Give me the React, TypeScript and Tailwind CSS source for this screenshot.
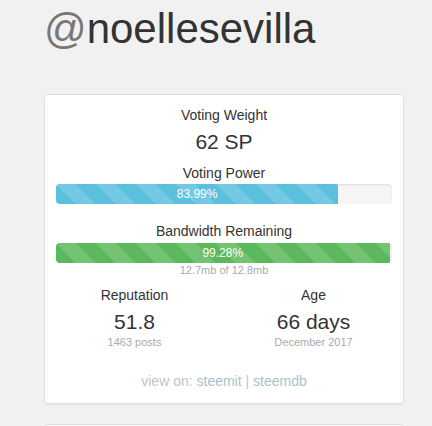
import React from "react";

const stripes =
  "linear-gradient(45deg, rgba(255,255,255,.15) 25%, transparent 25%, transparent 50%, rgba(255,255,255,.15) 50%, rgba(255,255,255,.15) 75%, transparent 75%, transparent)";

function Bar({ pct, color, label }: { pct: number; color: string; label: string }) {
  return (
    <div className="h-[20px] w-full overflow-hidden rounded-[4px] bg-[#f5f5f5] shadow-[inset_0_1px_2px_rgba(0,0,0,0.1)]">
      <div
        className="flex h-full items-center justify-center text-[12px] leading-[20px] text-white"
        style={{ width: `${pct}%`, backgroundColor: color, backgroundImage: stripes, backgroundSize: "40px 40px" }}
      >
        {label}
      </div>
    </div>
  );
}

export default function App() {
  return (
    <div className="min-h-[426px] w-[432px] bg-[#f1f1f1] font-['Liberation_Sans',Arial,sans-serif] text-[#333]">
      <div className="pl-[44px] pr-[28px] pt-[6px]">
        <h1 className="m-0 text-[42px] leading-[46px] font-normal">
          <span className="text-[#777]">@</span>noellesevilla
        </h1>
        <div className="mt-[42px] rounded-[3px] border border-[#ddd] bg-white pt-[10px] pb-[12px] text-center shadow-[0_1px_1px_rgba(0,0,0,0.05)]">
          <div className="px-[11px]">
            <div className="text-[14px] leading-[20px]">Voting Weight</div>
            <div className="mt-[2px] text-[21px] leading-[30px]">62 SP</div>
            <div className="mt-[6px] text-[14px] leading-[20px]">Voting Power</div>
            <div className="mt-[1px]">
              <Bar pct={83.99} color="#5bc0de" label="83.99%" />
            </div>
            <div className="mt-[17px] text-[14px] leading-[20px]">Bandwidth Remaining</div>
            <div className="mt-[2px]">
              <Bar pct={99.28} color="#5cb85c" label="99.28%" />
            </div>
            <div className="text-[11px] leading-[14px] text-[#aaa]">12.7mb of 12.8mb</div>
          </div>
          <div className="mt-[8px] grid grid-cols-2">
            <div>
              <div className="text-[14px] leading-[20px]">Reputation</div>
              <div className="mt-[5px] text-[21px] leading-[24px]">51.8</div>
              <div className="mt-[1px] text-[11px] leading-[14px] text-[#aaa]">1463 posts</div>
            </div>
            <div>
              <div className="text-[14px] leading-[20px]">Age</div>
              <div className="mt-[5px] text-[21px] leading-[24px]">66 days</div>
              <div className="mt-[1px] text-[11px] leading-[14px] text-[#aaa]">December 2017</div>
            </div>
          </div>
          <div className="mt-[22px] text-[14px] leading-[20px] text-[#c4c4c4]">
            view on: <span className="text-[#a7c3cc]">steemit</span> | <span className="text-[#a7c3cc]">steemdb</span>
          </div>
        </div>
        <div className="mt-[20px] h-[20px] rounded-t-[3px] border border-[#ddd] bg-white"></div>
      </div>
    </div>
  );
}
